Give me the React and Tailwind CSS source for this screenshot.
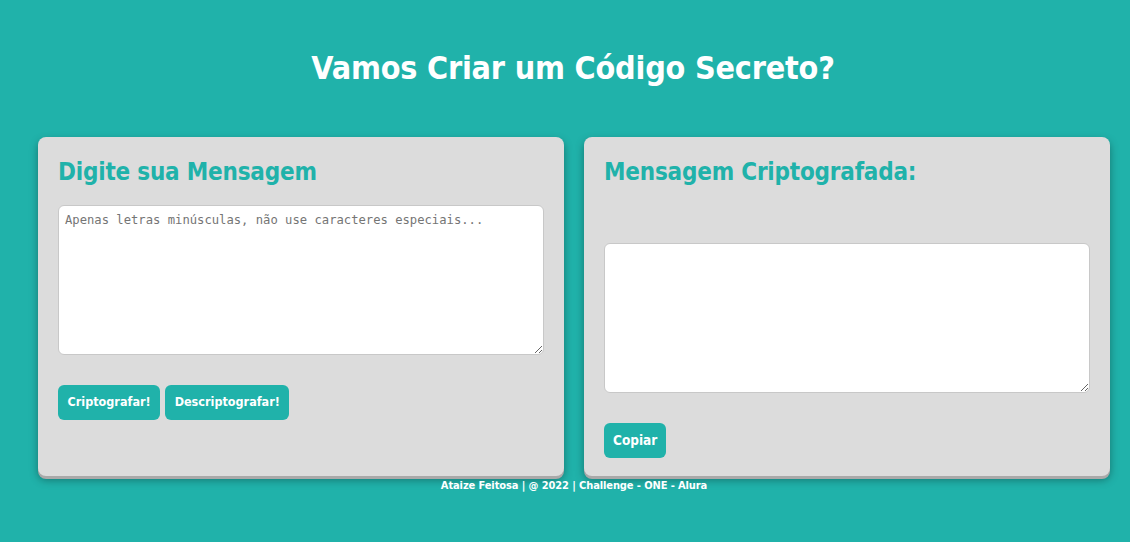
export default function App() {
  return (
    <div className="min-h-[542px] bg-[#20b2aa] font-['DejaVu_Sans_Condensed','DejaVu_Sans',sans-serif] pt-[44px] pb-[40px]">
      <h1 className="text-center text-white font-bold text-[32px] leading-[48px] tracking-[-0.2px] pl-[16px]">
        Vamos Criar um Código Secreto?
      </h1>

      <main className="flex gap-[20px] pl-[38px] pr-[20px] mt-[45px]">
        {/* entrada */}
        <section className="flex-1 h-[339px] bg-[#dcdcdc] rounded-[8px] px-[20px] pt-[20px] shadow-[0_3px_0_#a9a9a9,0_4px_8px_rgba(0,0,0,0.35)]">
          <h2 className="text-[#20b2aa] font-bold text-[24px] leading-[30px] tracking-[-0.2px]">
            Digite sua Mensagem
          </h2>
          <textarea
            className="block w-full h-[150px] mt-[18px] bg-white rounded-[6px] border border-[#c8c8c8] px-[6px] py-[6px] font-['DejaVu_Sans_Mono',monospace] text-[12.2px] leading-[16px] placeholder:text-[#757575] outline-none"
            placeholder="Apenas letras minúsculas, não use caracteres especiais..."
          ></textarea>
          <div className="flex gap-[5px] mt-[30px]">
            <button className="h-[35px] px-[9.5px] bg-[#20b2aa] text-white font-bold text-[12.5px] rounded-[6px]">
              Criptografar!
            </button>
            <button className="h-[35px] px-[9.5px] bg-[#20b2aa] text-white font-bold text-[12.5px] rounded-[6px]">
              Descriptografar!
            </button>
          </div>
        </section>

        {/* saida */}
        <section className="flex-1 h-[339px] bg-[#dcdcdc] rounded-[8px] px-[20px] pt-[20px] shadow-[0_3px_0_#a9a9a9,0_4px_8px_rgba(0,0,0,0.35)]">
          <h2 className="text-[#20b2aa] font-bold text-[24px] leading-[30px] tracking-[-0.2px]">
            Mensagem Criptografada:
          </h2>
          <textarea
            readOnly
            className="block w-full h-[150px] mt-[56px] bg-white rounded-[6px] border border-[#c8c8c8] px-[6px] py-[6px] font-['DejaVu_Sans_Mono',monospace] text-[12.2px] outline-none"
          ></textarea>
          <button className="mt-[30px] h-[35px] px-[9px] bg-[#20b2aa] text-white font-bold text-[13.5px] rounded-[6px]">
            Copiar
          </button>
        </section>
      </main>

      <footer className="text-center text-white font-bold text-[11px] leading-[14px] mt-[3px] pl-[18px] tracking-[-0.1px]">
        Ataize Feitosa | @ 2022 | Challenge - ONE - Alura
      </footer>
    </div>
  );
}
